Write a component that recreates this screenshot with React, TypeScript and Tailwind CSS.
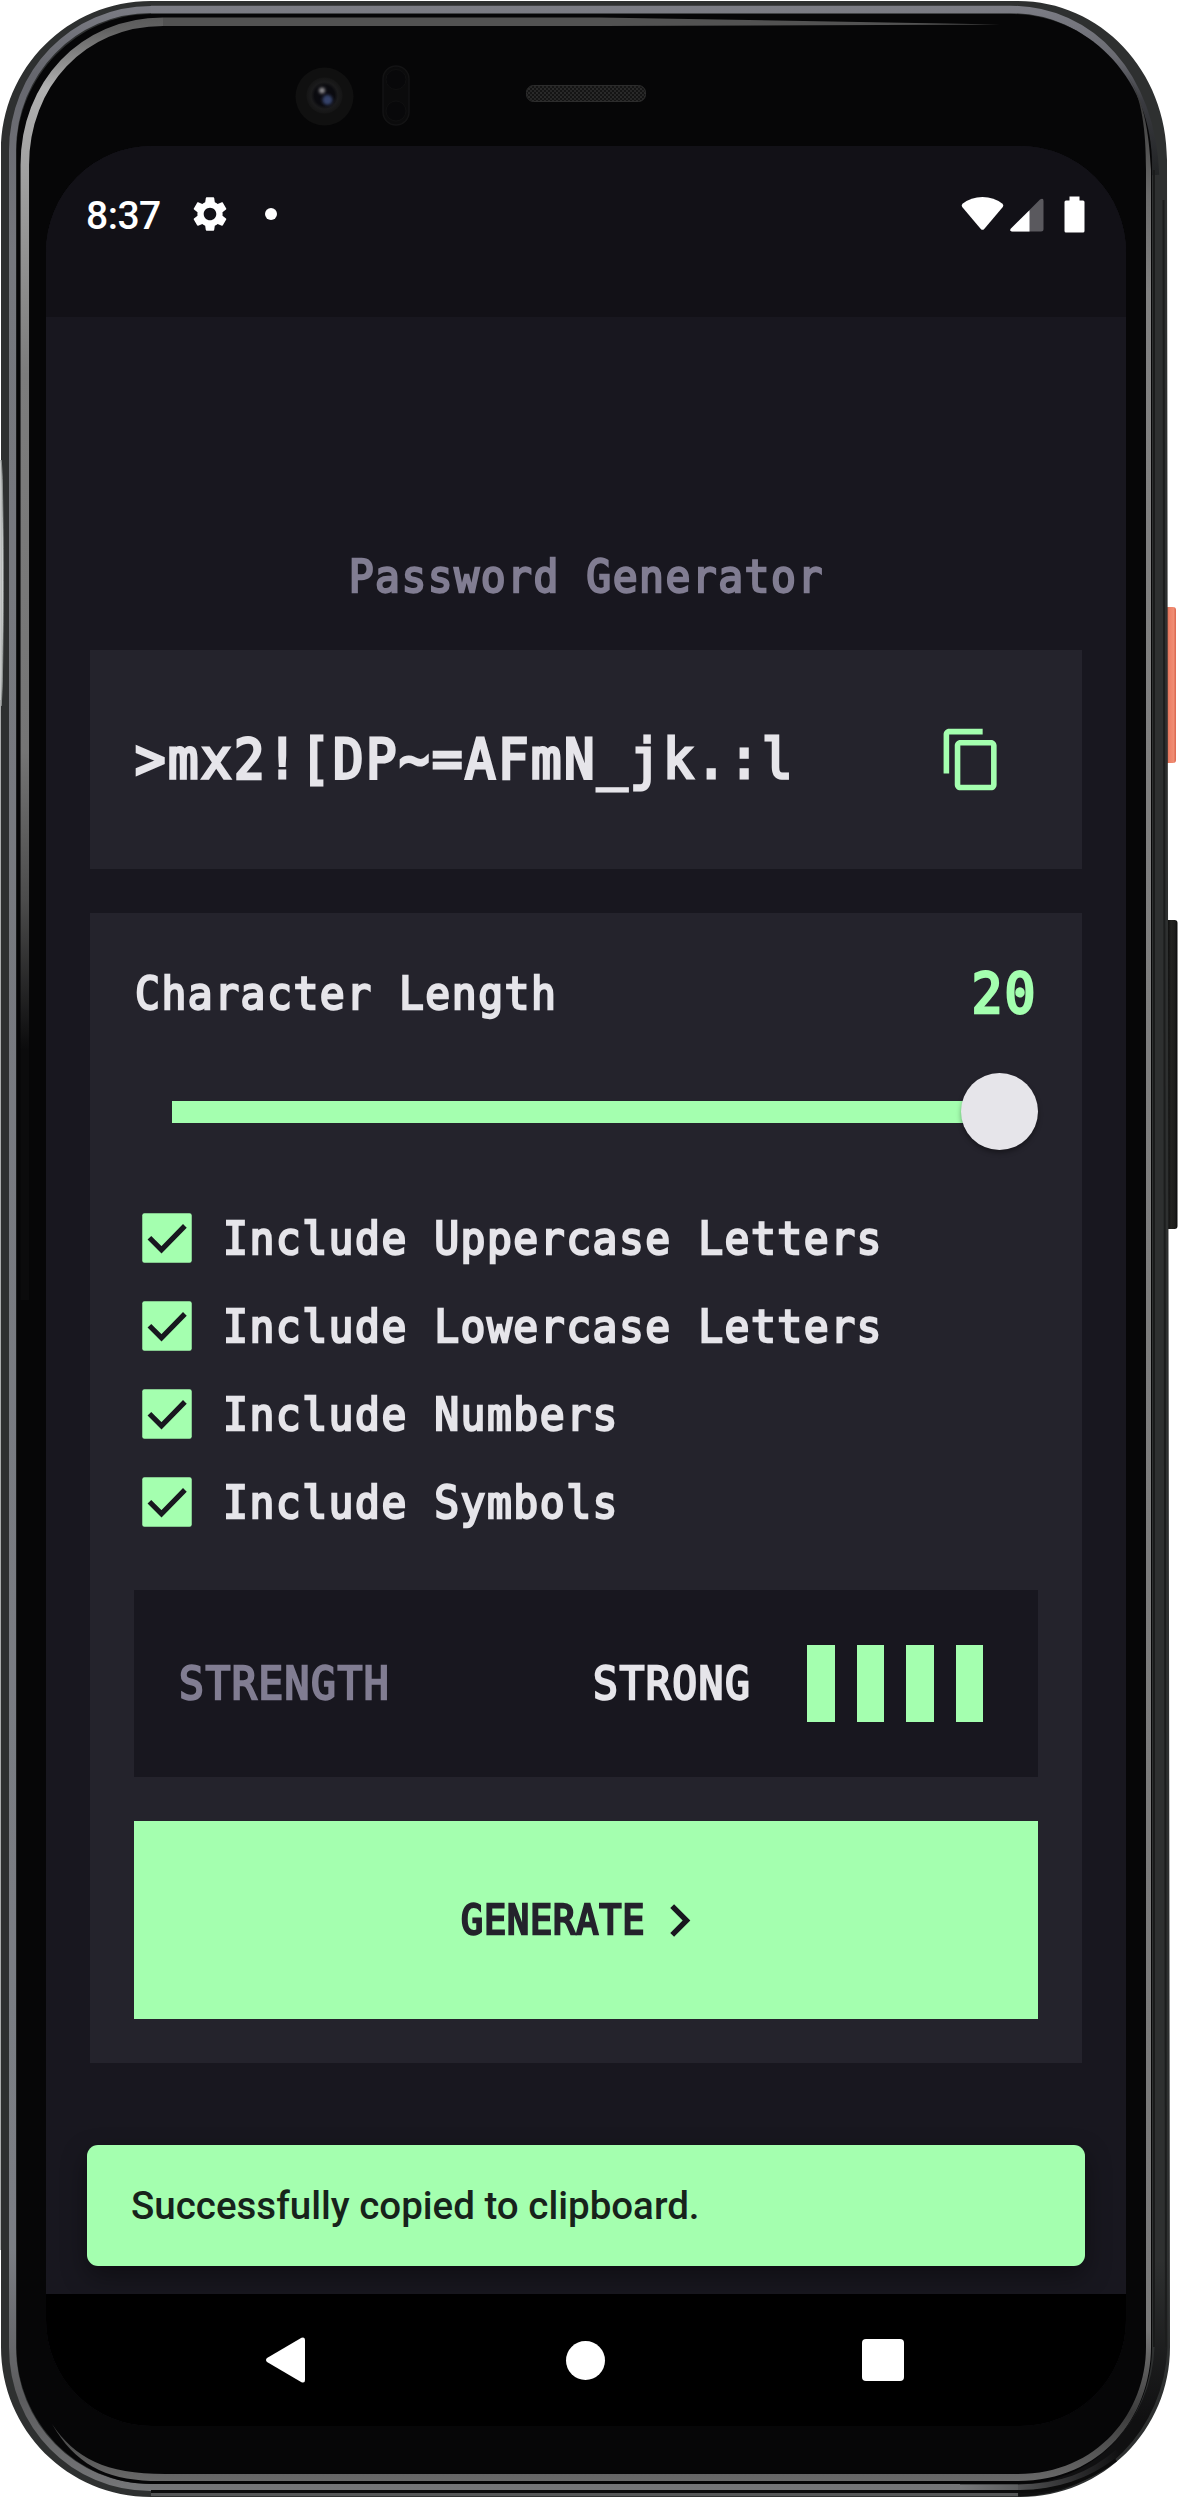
import React from "react";

const MONO = "inline-block scale-x-[0.92] font-['DejaVu_Sans_Mono','Liberation_Mono',monospace] whitespace-pre leading-none";
const BODY = "text-[45px] tracking-[1.6px] [-webkit-text-stroke:2.3px]";
const LARGE = "text-[55px] tracking-[2.76px] [-webkit-text-stroke:3.1px]";

/* Phone hardware: metal rim, glass edge highlights, camera, sensors, speaker, side keys */
function PhoneBody() {
  return (
    <svg className="absolute inset-0" width="1178" height="2498" viewBox="0 0 1178 2498" fill="none" aria-hidden="true">
      <defs>
        <linearGradient id="edgeL" x1="0" y1="0" x2="0" y2="2498" gradientUnits="userSpaceOnUse">
          <stop offset="0" stopColor="#525252" />
          <stop offset="0.012" stopColor="#626262" />
          <stop offset="0.035" stopColor="#b0b0b0" />
          <stop offset="0.07" stopColor="#a0a0a0" />
          <stop offset="0.15" stopColor="#7c7c7c" />
          <stop offset="0.3" stopColor="#757575" />
          <stop offset="0.36" stopColor="#4c4c4c" />
          <stop offset="0.42" stopColor="#0b0b0c" />
        </linearGradient>
        <linearGradient id="rim" x1="0" y1="0" x2="0" y2="2498" gradientUnits="userSpaceOnUse">
          <stop offset="0" stopColor="#7c7d85" />
          <stop offset="0.03" stopColor="#66676e" />
          <stop offset="0.1" stopColor="#75777d" />
          <stop offset="0.9" stopColor="#7b7e84" />
          <stop offset="0.96" stopColor="#5c5c5e" />
          <stop offset="1" stopColor="#77787a" />
        </linearGradient>
        <linearGradient id="rimR" x1="0" y1="5" x2="0" y2="180" gradientUnits="userSpaceOnUse">
          <stop offset="0" stopColor="#7c7d85" />
          <stop offset="0.3" stopColor="#6a6b72" />
          <stop offset="0.55" stopColor="#3a3b40" />
          <stop offset="1" stopColor="#202223" />
        </linearGradient>
        <linearGradient id="cornerR" x1="0" y1="2260" x2="0" y2="2420" gradientUnits="userSpaceOnUse">
          <stop offset="0" stopColor="#101011" stopOpacity="0" />
          <stop offset="1" stopColor="#101011" />
        </linearGradient>
        <linearGradient id="rimB" x1="960" y1="0" x2="1120" y2="0" gradientUnits="userSpaceOnUse">
          <stop offset="0" stopColor="#77787a" />
          <stop offset="1" stopColor="#77787a" stopOpacity="0" />
        </linearGradient>
        <linearGradient id="edgeR" x1="0" y1="100" x2="0" y2="2498" gradientUnits="userSpaceOnUse">
          <stop offset="0" stopColor="#3a3a3a" />
          <stop offset="0.04" stopColor="#6a6a6a" />
          <stop offset="0.08" stopColor="#808080" />
          <stop offset="0.93" stopColor="#787878" />
          <stop offset="0.965" stopColor="#3c3c3c" />
          <stop offset="1" stopColor="#757575" />
        </linearGradient>
        <linearGradient id="power" x1="1166" y1="0" x2="1176" y2="0" gradientUnits="userSpaceOnUse">
          <stop offset="0" stopColor="#c65a44" />
          <stop offset="0.3" stopColor="#ec7f65" />
          <stop offset="0.75" stopColor="#f08d74" />
          <stop offset="1" stopColor="#d9654c" />
        </linearGradient>
        <linearGradient id="keys" x1="1167" y1="0" x2="1177" y2="0" gradientUnits="userSpaceOnUse">
          <stop offset="0" stopColor="#090909" />
          <stop offset="0.4" stopColor="#222220" />
          <stop offset="0.8" stopColor="#1c1c1b" />
          <stop offset="1" stopColor="#0d0d0d" />
        </linearGradient>
        <radialGradient id="lens">
          <stop offset="0" stopColor="#0a0a12" />
          <stop offset="0.55" stopColor="#0a0a0e" />
          <stop offset="0.75" stopColor="#1b1b1c" />
          <stop offset="1" stopColor="#151515" />
        </radialGradient>
        <pattern id="mesh" width="4" height="4" patternUnits="userSpaceOnUse">
          <rect width="4" height="4" fill="#141414" />
          <circle cx="1" cy="1" r="0.8" fill="#444" />
          <circle cx="3" cy="3" r="0.8" fill="#3c3c3c" />
        </pattern>
        <filter id="soft" x="-50%" y="-50%" width="200%" height="200%">
          <feGaussianBlur stdDeviation="1.6" />
        </filter>
      </defs>

      <rect x="1165" y="607" width="11" height="156" rx="3" fill="url(#power)" />
      <rect x="1165" y="920" width="12.5" height="309" rx="3" fill="url(#keys)" />

      <path d="M151 1H1018C1100 1 1167 70 1167 160L1170 2347C1170 2430 1103 2497 1020 2497H151C68 2497 1 2430 1 2347V151C1 68 68 1 151 1Z" fill="#2e3030" />
      <path d="M151 2494.500H1020" stroke="#555657" strokeWidth="3" />

      {/* polished metal rim */}
      <path d="M151 9.500H1010C1092 9.500 1152 76 1155.500 175" stroke="url(#rimR)" strokeWidth="7.500" />
      <path d="M1018 2490C1098 2489 1158 2425 1161 2347V2260" stroke="url(#cornerR)" strokeWidth="13" />
      <path d="M151 9.500C73 9.500 12.500 73 12.500 151V2347C12.500 2425 73 2487.500 151 2487.500H960" stroke="url(#rim)" strokeWidth="7" />
      <path d="M960 2487.500H1018C1060 2487 1090 2476 1118 2452" stroke="url(#rimB)" strokeWidth="6" />
      <path d="M151 2491.500H1020C1056 2491.500 1090 2480 1116 2460" stroke="#0c0c0c" strokeWidth="3" />
      <path d="M1154 170V2347" stroke="#1a1b1b" strokeWidth="2" />
      <path d="M1163.500 200L1166 2347" stroke="#1c1d1d" strokeWidth="2" />

      {/* black glass */}
      <path d="M151 14H1010C1090 14 1152 80 1152 165V2347C1152 2422 1093 2484 1018 2484H151C77 2484 16.500 2422 16.500 2347V151C16.500 77 77 14 151 14Z" fill="#060607" />

      {/* glass edge reflections */}
      <path d="M1128 76C1142 98 1146 130 1146 170V2347C1146 2412 1098 2474 1018 2474H165C105 2474 75 2458 52 2424C75 2464 105 2479 151 2481H1018C1102 2481 1151 2416 1151 2347V170C1149 130 1143 98 1128 76Z" fill="url(#edgeR)" />
      <path d="M24.800 1300V165C24.800 85 82 21.800 163 21.800" stroke="url(#edgeL)" strokeWidth="8.500" />
      <path d="M163 17.500H600L1000 24.500L600 26H163Z" fill="#525252" />

      {/* antenna inset on the left side */}
      <path d="M1 460C4 470 4 690 1 706Z" fill="#e2e6e5" stroke="#8b8f8e" strokeWidth="1" />
      <path d="M0.500 700V2250" stroke="#a9abab" strokeWidth="1" />

      {/* camera */}
      <circle cx="324.500" cy="96.500" r="29" fill="#101010" />
      <circle cx="324.500" cy="95.500" r="18" fill="url(#lens)" />
      <circle cx="322" cy="90.500" r="3" fill="#8f8d90" filter="url(#soft)" />
      <circle cx="327.500" cy="100" r="5" fill="#35426b" filter="url(#soft)" />
      {/* proximity sensors */}
      <rect x="383" y="66" width="26" height="59" rx="13" fill="#0b0b0c" stroke="#131314" strokeWidth="1.500" />
      <circle cx="396" cy="79.500" r="10" fill="#08080a" stroke="#101011" />
      <circle cx="396" cy="111" r="10" fill="#08080a" stroke="#101011" />
      {/* earpiece */}
      <rect x="526.500" y="85.500" width="119" height="16" rx="7" fill="url(#mesh)" stroke="#2c2c2c" />
    </svg>
  );
}

function StatusBar() {
  return (
    <header className="flex h-[171px] items-start justify-between bg-[#121117] pl-10 pr-[41px] pt-[48px] text-white">
      <div className="flex h-10 items-center font-['Roboto',sans-serif]">
        <span className="w-[100px] whitespace-nowrap pt-[4px] text-[39px] font-medium leading-none tracking-[-0.5px]">8:37</span>
        <svg className="ml-[3px]" width="42" height="42" viewBox="0 0 24 24" fill="currentColor">
          <path d="M19.140 12.940c.04-.3.060-.61.060-.94 0-.32-.02-.64-.07-.94l2.030-1.580c.18-.14.230-.41.120-.61l-1.920-3.320c-.12-.22-.37-.29-.59-.22l-2.390.96c-.5-.38-1.030-.7-1.620-.94l-.36-2.540c-.04-.24-.24-.41-.48-.41h-3.840c-.24 0-.43.170-.47.410l-.36 2.540c-.59.240-1.130.570-1.620.940l-2.390-.96c-.22-.08-.47 0-.59.220L2.740 8.870c-.12.210-.08.470.120.610l2.030 1.580c-.05.300-.09.630-.09.940s.020.640.070.940l-2.030 1.580c-.18.140-.23.410-.12.610l1.920 3.320c.12.220.37.290.59.220l2.390-.96c.5.380 1.030.7 1.620.94l.36 2.540c.05.240.24.410.48.410h3.840c.24 0 .44-.17.47-.41l.36-2.540c.59-.24 1.130-.56 1.620-.94l2.390.96c.22.080.47 0 .59-.22l1.920-3.320c.12-.22.070-.47-.12-.61l-2.010-1.580zM12 15.600c-1.980 0-3.600-1.620-3.600-3.600s1.620-3.600 3.600-3.600 3.600 1.620 3.600 3.600-1.620 3.600-3.600 3.600z" />
        </svg>
        <span className="ml-[34px] h-3 w-3 rounded-full bg-white" />
      </div>
      <div className="flex h-10 items-center">
        <svg width="43" height="36" viewBox="0 0 43 36" fill="currentColor">
          <path d="M1.500 7.800Q10 1 21.500 1Q33 1 41.500 7.800Q43 9.300 41.800 11L23 33.200Q21.500 34.500 20 33.200L1.200 11Q0 9.300 1.500 7.800Z" />
        </svg>
        <svg className="ml-[6px]" width="34" height="36" viewBox="0 0 34 36" fill="currentColor">
          <path d="M30 3.500Q33.500 1.500 33.500 5V33Q33.500 35.500 31 35.500H2Q-1 35 1 32.500Z" fill="#5a595e" />
          <path d="M19.500 14.300V35.500H2Q-1 35 1 32.500Z" />
        </svg>
        <svg className="ml-5" width="21" height="37" viewBox="0 0 21 37" fill="currentColor">
          <path d="M5.500 0.500H15.500V4.500H19Q20.500 4.500 20.500 6V35Q20.500 36.500 19 36.500H2Q0.500 36.500 0.500 35V6Q0.500 4.500 2 4.500H5.500Z" />
        </svg>
      </div>
    </header>
  );
}

function CheckRow({ label }: { label: string }) {
  return (
    <label className="flex h-[88px] items-center">
      <svg width="66" height="66" viewBox="0 0 24 24">
        <rect x="3" y="3" width="18" height="18" rx="0.800" fill="#a4ffaf" />
        <path d="M5.600 11.900L10 16.300L18.500 7.600" fill="none" stroke="#18171f" strokeWidth="1.900" />
      </svg>
      <span className={`${MONO} ${BODY} ml-[23px] origin-left text-[#e6e5ea]`}>{label}</span>
    </label>
  );
}

const OPTIONS = ["Include Uppercase Letters", "Include Lowercase Letters", "Include Numbers", "Include Symbols"];

function Settings() {
  return (
    <section className="mt-[44px] flex h-[1150px] flex-col bg-[#24232c] p-[44px]">
      <div className="flex h-[73px] items-center justify-between pl-px">
        <span className={`${MONO} ${BODY} origin-left text-[#e6e5ea]`}>Character Length</span>
        <span className={`${MONO} ${LARGE} origin-right text-[#a4ffaf]`}>20</span>
      </div>
      <div className="mt-[43px] flex h-[77px] items-center pl-[38px]">
        <div className="h-[22px] grow bg-[#a4ffaf]" />
        <div className="-ml-[2px] h-[77px] w-[77px] rounded-full bg-[#e6e5ea] shadow-[0_3px_5px_rgba(0,0,0,0.35)]" />
      </div>
      <div className="mt-[44px]">
        {OPTIONS.map((o) => (
          <CheckRow key={o} label={o} />
        ))}
      </div>
      <div className="mt-[44px] flex h-[187px] shrink-0 items-center justify-between bg-[#18171f] pl-[45px] pr-[55px]">
        <span className={`${MONO} ${BODY} origin-left text-[#817d92]`}>STRENGTH</span>
        <div className="flex items-center">
          <div className="w-[158px]">
            <span className={`${MONO} ${BODY} origin-left align-middle text-[#e6e5ea]`}>STRONG</span>
          </div>
          <div className="ml-[56px] flex gap-[22px]">
            {[0, 1, 2, 3].map((i) => (
              <div key={i} className="h-[77px] w-[27.500px] bg-[#a4ffaf]" />
            ))}
          </div>
        </div>
      </div>
      <button className="mt-[44px] flex h-[198px] shrink-0 items-center justify-center bg-[#a4ffaf] text-[#24232c]">
        <span className="flex w-[186px]">
          <span className={`${MONO} origin-left text-[40px] tracking-[0.95px] [-webkit-text-stroke:2.4px]`}>GENERATE</span>
        </span>
        <svg width="65" height="65" viewBox="0 0 24 24" fill="#18171f">
          <path d="M10 6 8.590 7.410 13.170 12l-4.580 4.590L10 18l6-6z" />
        </svg>
      </button>
    </section>
  );
}

function NavBar() {
  return (
    <nav className="flex h-[132px] items-center bg-black pl-[219px] text-white">
      <svg width="42" height="48" viewBox="0 0 42 48" fill="currentColor">
        <path d="M2 22L36.500 1.800Q40 0.500 40 4V44Q40 47.500 36.500 46.200L2 26Q0 24 2 22Z" />
      </svg>
      <div className="ml-[259px] h-[39px] w-[39px] rounded-full bg-white" />
      <div className="ml-[257px] h-[42px] w-[42px] rounded-[4px] bg-white" />
    </nav>
  );
}

export default function App() {
  return (
    <div className="relative h-[2498px] w-[1178px] overflow-hidden bg-white pl-[46px] pt-[146px]">
      <PhoneBody />
      <div className="relative flex h-[2280px] w-[1080px] flex-col overflow-hidden rounded-[106px] bg-[#18171f]">
        <StatusBar />
        <main className="flex grow flex-col px-[44px] pt-[227px]">
          <h1 className="flex h-[64px] items-center justify-center text-[#817d92]">
            <span className={`${MONO} ${BODY}`}>Password Generator</span>
          </h1>
          <section className="mt-[42px] flex h-[219px] shrink-0 items-center justify-between bg-[#24232c] pl-[45px] pr-[77px]">
            <div className="flex w-[700px]">
              <span className={`${MONO} ${LARGE} origin-left text-[#e6e5ea]`}>{">mx2![DP~=AFmN_jk.:l"}</span>
            </div>
            <svg width="67" height="67" viewBox="0 0 24 24" fill="#a4ffaf">
              <path d="M16 1H4c-1.100 0-2 .9-2 2v14h2V3h12V1zm3 4H8c-1.100 0-2 .9-2 2v14c0 1.100.9 2 2 2h11c1.100 0 2-.9 2-2V7c0-1.100-.9-2-2-2zm0 16H8V7h11v14z" />
            </svg>
          </section>
          <Settings />
          <div className="-mx-[3px] mt-[82px] flex h-[121px] items-center rounded-[11px] bg-[#a4ffaf] px-[44px] font-['Roboto',sans-serif] text-[38.500px] font-medium text-[#17231b] shadow-[0_10px_26px_rgba(0,0,0,0.4)]">
            Successfully copied to clipboard.
          </div>
        </main>
        <NavBar />
      </div>
    </div>
  );
}
